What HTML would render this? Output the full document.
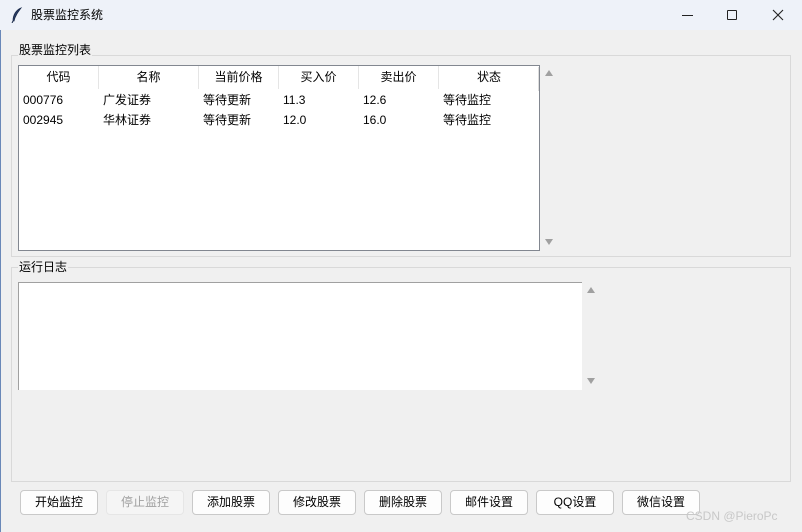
<!DOCTYPE html>
<html><head><meta charset="utf-8"><style>
*{margin:0;padding:0;box-sizing:border-box}
body{width:802px;height:532px;background:#f0f0f0;font-family:"Liberation Sans","Noto Sans CJK SC",sans-serif;font-size:12px;color:#000;position:relative;overflow:hidden}
.a{position:absolute}
.title{left:0;top:0;width:802px;height:30px;background:#eef2f9}
.fr{border:1px solid #d9d9d9}
.lbl{background:#f0f0f0;padding:0 1px;font-size:12px;line-height:14px}
.th{top:66px;height:23px;line-height:23px;text-align:center;background:#fff;border-right:1px solid #e5e5e5}
.td{line-height:14px}
.btn{top:490px;height:25px;width:78px;background:#fdfdfd;border:1px solid #c9c9c9;border-radius:4px;text-align:center;line-height:23px;font-size:12px}
.tri{width:0;height:0;border-left:4px solid transparent;border-right:4px solid transparent}
</style></head><body>
<div class="a" style="left:0;top:0;width:1px;height:532px;background:#6a88b8"></div>
<div class="a title"></div>
<svg class="a" style="left:10px;top:7px" width="14" height="16" viewBox="0 0 14 16"><path d="M11 1 C6 3 3 8 3 14 L4 14 C5 9 8 5 11 1 Z" fill="#2a3d66" stroke="#1a2a4a" stroke-width="0.8"/><path d="M3 14 L2 16" stroke="#1a2a4a"/></svg>
<div class="a" style="left:31px;top:7px;font-size:12px;line-height:16px">股票监控系统</div>
<div class="a" style="left:682px;top:15px;width:11px;height:1px;background:#222"></div>
<div class="a" style="left:727px;top:10px;width:10px;height:10px;border:1px solid #222;border-radius:1px"></div>
<svg class="a" style="left:772px;top:9px" width="12" height="12"><path d="M1 1L11 11M11 1L1 11" stroke="#222" stroke-width="1.1"/></svg>

<div class="a fr" style="left:11px;top:55px;width:780px;height:202px"></div>
<div class="a lbl" style="left:18px;top:43px">股票监控列表</div>
<div class="a" style="left:18px;top:65px;width:522px;height:186px;background:#fff;border:1px solid #828790"></div>
<div class="a th" style="left:19px;width:80px">代码</div>
<div class="a th" style="left:99px;width:100px">名称</div>
<div class="a th" style="left:199px;width:80px">当前价格</div>
<div class="a th" style="left:279px;width:80px">买入价</div>
<div class="a th" style="left:359px;width:80px">卖出价</div>
<div class="a th" style="left:439px;width:100px;border-right:none">状态</div>
<div class="a" style="left:538px;top:67px;width:1px;height:24px;background:#ddd"></div>
<div class="a td" style="left:23px;top:93px">000776</div>
<div class="a td" style="left:103px;top:93px">广发证券</div>
<div class="a td" style="left:203px;top:93px">等待更新</div>
<div class="a td" style="left:283px;top:93px">11.3</div>
<div class="a td" style="left:363px;top:93px">12.6</div>
<div class="a td" style="left:443px;top:93px">等待监控</div>
<div class="a td" style="left:23px;top:113px">002945</div>
<div class="a td" style="left:103px;top:113px">华林证券</div>
<div class="a td" style="left:203px;top:113px">等待更新</div>
<div class="a td" style="left:283px;top:113px">12.0</div>
<div class="a td" style="left:363px;top:113px">16.0</div>
<div class="a td" style="left:443px;top:113px">等待监控</div>
<div class="a tri" style="left:545px;top:70px;border-bottom:6px solid #a0a0a0"></div>
<div class="a tri" style="left:545px;top:239px;border-top:6px solid #a0a0a0"></div>

<div class="a fr" style="left:11px;top:267px;width:780px;height:215px"></div>
<div class="a lbl" style="left:18px;top:260px">运行日志</div>
<div class="a" style="left:18px;top:282px;width:564px;height:108px;background:#fff;border-top:1px solid #a0a0a0;border-left:1px solid #a0a0a0"></div>
<div class="a tri" style="left:587px;top:287px;border-bottom:6px solid #a0a0a0"></div>
<div class="a tri" style="left:587px;top:378px;border-top:6px solid #a0a0a0"></div>

<div class="a btn" style="left:20px">开始监控</div>
<div class="a btn" style="left:106px;background:#f5f5f5;border-color:#e6e6e6;color:#a0a0a0">停止监控</div>
<div class="a btn" style="left:192px">添加股票</div>
<div class="a btn" style="left:278px">修改股票</div>
<div class="a btn" style="left:364px">删除股票</div>
<div class="a btn" style="left:450px">邮件设置</div>
<div class="a btn" style="left:536px">QQ设置</div>
<div class="a btn" style="left:622px">微信设置</div>
<div class="a" style="left:686px;top:509px;color:#c8c8c8;font-size:12px">CSDN @PieroPc</div>
</body></html>
